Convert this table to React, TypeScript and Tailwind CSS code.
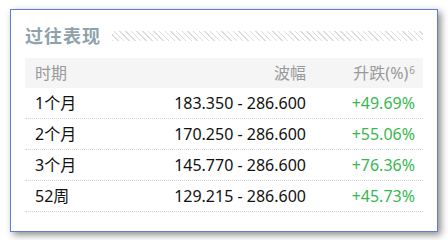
const rows = [
  { period: "1个月", range: "183.350 - 286.600", change: "+49.69%" },
  { period: "2个月", range: "170.250 - 286.600", change: "+55.06%" },
  { period: "3个月", range: "145.770 - 286.600", change: "+76.36%" },
  { period: "52周", range: "129.215 - 286.600", change: "+45.73%" },
];

export default function App() {
  return (
    <div
      className="h-[240px] w-[448px] bg-white pl-[10px] pt-[9px]"
      style={{ fontFamily: '"Noto Sans", "Noto Sans CJK SC", sans-serif' }}
    >
      <div className="w-[428px] h-[223px] border border-[#5b7fd3] bg-white px-[14px] pt-[13px] shadow-[3px_3px_7px_rgba(0,0,0,0.45)]">
        {/* title */}
        <div className="flex h-[26px] items-center gap-[11px]">
          <span className="text-[18px] font-bold leading-none tracking-[1px] text-[#8ea2ab]">过往表现</span>
          <div className="h-[10px] flex-1 bg-[repeating-linear-gradient(45deg,#dcdcdc_0,#dcdcdc_1px,transparent_1px,transparent_4px)]" />
        </div>

        <div className="mt-[9px] text-[16px]">
          <div className="grid h-[30px] grid-cols-[110px_161px_1fr] items-center bg-[#f5f5f5] pl-[10px] pr-[8px] text-[#999]">
            <span>时期</span>
            <span className="text-right">波幅</span>
            <span className="text-right">
              升跌(%)<sup className="relative -top-[5px] ml-[1px] text-[10px]">6</sup>
            </span>
          </div>
          {rows.map((r) => (
            <div
              key={r.period}
              className="grid h-[31px] grid-cols-[110px_161px_1fr] items-center border-b border-dotted border-[#d4d4d4] pl-[10px] pr-[8px] text-[#111]"
            >
              <span>{r.period}</span>
              <span className="text-right">{r.range}</span>
              <span className="text-right text-[#36b84f]">{r.change}</span>
            </div>
          ))}
        </div>
      </div>
    </div>
  );
}
